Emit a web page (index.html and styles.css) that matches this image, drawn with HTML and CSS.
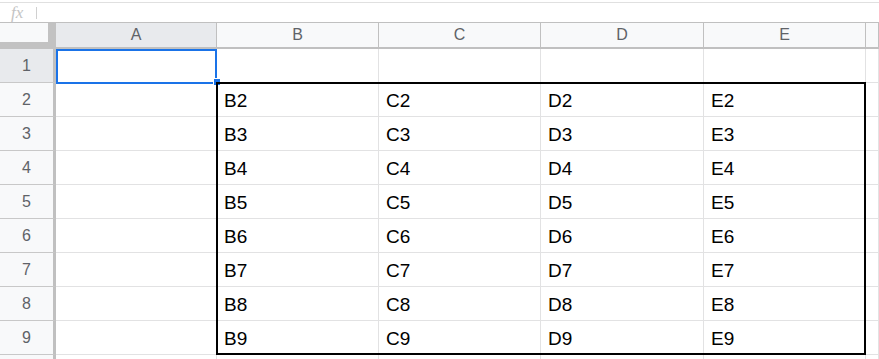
FILE: index.html
```html
<!DOCTYPE html>
<html lang="en">
<head>
  <meta charset="UTF-8">
  <meta name="viewport" content="width=device-width, initial-scale=1.0">
  <title>Sheet</title>
  <link rel="stylesheet" href="styles.css">
</head>
<body>
  <!-- Formula bar -->
  <div class="formula-bar">
    <span class="fx">fx</span>
    <span class="sep"></span>
  </div>

  <!-- Grid -->
  <div class="sheet">
    <div class="grid">
      <div class="corner"><div class="corner-inner"></div></div>
      <div class="col-head active">A</div>
      <div class="col-head">B</div>
      <div class="col-head">C</div>
      <div class="col-head">D</div>
      <div class="col-head">E</div>
      <div class="col-head"></div>

      <div class="row-head active">1</div>
      <div class="cell"></div><div class="cell"></div><div class="cell"></div><div class="cell"></div><div class="cell"></div><div class="cell"></div>

      <div class="row-head">2</div>
      <div class="cell"></div><div class="cell">B2</div><div class="cell">C2</div><div class="cell">D2</div><div class="cell">E2</div><div class="cell"></div>

      <div class="row-head">3</div>
      <div class="cell"></div><div class="cell">B3</div><div class="cell">C3</div><div class="cell">D3</div><div class="cell">E3</div><div class="cell"></div>

      <div class="row-head">4</div>
      <div class="cell"></div><div class="cell">B4</div><div class="cell">C4</div><div class="cell">D4</div><div class="cell">E4</div><div class="cell"></div>

      <div class="row-head">5</div>
      <div class="cell"></div><div class="cell">B5</div><div class="cell">C5</div><div class="cell">D5</div><div class="cell">E5</div><div class="cell"></div>

      <div class="row-head">6</div>
      <div class="cell"></div><div class="cell">B6</div><div class="cell">C6</div><div class="cell">D6</div><div class="cell">E6</div><div class="cell"></div>

      <div class="row-head">7</div>
      <div class="cell"></div><div class="cell">B7</div><div class="cell">C7</div><div class="cell">D7</div><div class="cell">E7</div><div class="cell"></div>

      <div class="row-head">8</div>
      <div class="cell"></div><div class="cell">B8</div><div class="cell">C8</div><div class="cell">D8</div><div class="cell">E8</div><div class="cell"></div>

      <div class="row-head">9</div>
      <div class="cell"></div><div class="cell">B9</div><div class="cell">C9</div><div class="cell">D9</div><div class="cell">E9</div><div class="cell"></div>

      <!-- next row, only its top edge is visible -->
      <div class="row-head"></div>
      <div class="cell"></div><div class="cell"></div><div class="cell"></div><div class="cell"></div><div class="cell"></div><div class="cell"></div>
    </div>

    <!-- Selected cell A1 -->
    <div class="selection"></div>
    <div class="fill-handle"></div>

    <!-- Bordered range B2:E9 -->
    <div class="range-border"></div>
  </div>
</body>
</html>
```

FILE: styles.css
```css
body {
  margin: 0;
  padding: 0;
  height: 359px;
  overflow: hidden;
  background-color: #fff;
  font-family: "Liberation Sans", Arial, sans-serif;
}

.formula-bar {
  margin-top: 2px;
  height: 19px;
  border-top: 1px solid #e0e0e0;
  display: flex;
  align-items: center;
  padding-left: 11px;
}

.fx {
  font-family: "Liberation Serif", serif;
  font-style: italic;
  font-size: 17px;
  color: #c4c4c4;
  width: 25px;
}

.sep {
  width: 1px;
  height: 12px;
  background-color: #d0d0d0;
}

.sheet {
  position: relative;
}

.grid {
  display: grid;
  grid-template-columns: 56px 161px 162px 162px 163px 162px 1fr;
  grid-template-rows: 27px repeat(10, 34px);
}

.corner {
  background-color: #c2c2c2;
  border-top: 1px solid #c0c0c0;
}

.corner-inner {
  width: 48px;
  height: 19px;
  background-color: #f8f9fa;
}

.col-head {
  box-sizing: border-box;
  background-color: #f8f9fa;
  border-top: 1px solid #c0c0c0;
  border-right: 1px solid #c0c0c0;
  border-bottom: 2px solid #c0c0c0;
  display: flex;
  justify-content: center;
  align-items: center;
  font-size: 16px;
  color: #5f6368;
}

.row-head {
  box-sizing: border-box;
  background-color: #f8f9fa;
  border-right: 3px solid #c0c0c0;
  border-bottom: 1px solid #c8c8c8;
  display: flex;
  justify-content: center;
  align-items: center;
  font-size: 16px;
  color: #5f6368;
}

.col-head.active, .row-head.active {
  background-color: #e8eaed;
}

.cell {
  box-sizing: border-box;
  border-right: 1px solid #e2e2e3;
  border-bottom: 1px solid #e2e2e3;
  display: flex;
  align-items: flex-end;
  padding: 0 0 4px 7px;
  font-size: 19px;
  color: #000;
}

.selection {
  position: absolute;
  left: 56px;
  top: 27px;
  width: 161px;
  height: 35px;
  box-sizing: border-box;
  border: 2px solid #1a73e8;
}

.fill-handle {
  position: absolute;
  left: 214px;
  top: 57px;
  width: 6px;
  height: 6px;
  background-color: #1a73e8;
  outline: 1px solid #fff;
}

.range-border {
  position: absolute;
  left: 216px;
  top: 60px;
  width: 650px;
  height: 273px;
  box-sizing: border-box;
  border: 2px solid #000;
}
```
